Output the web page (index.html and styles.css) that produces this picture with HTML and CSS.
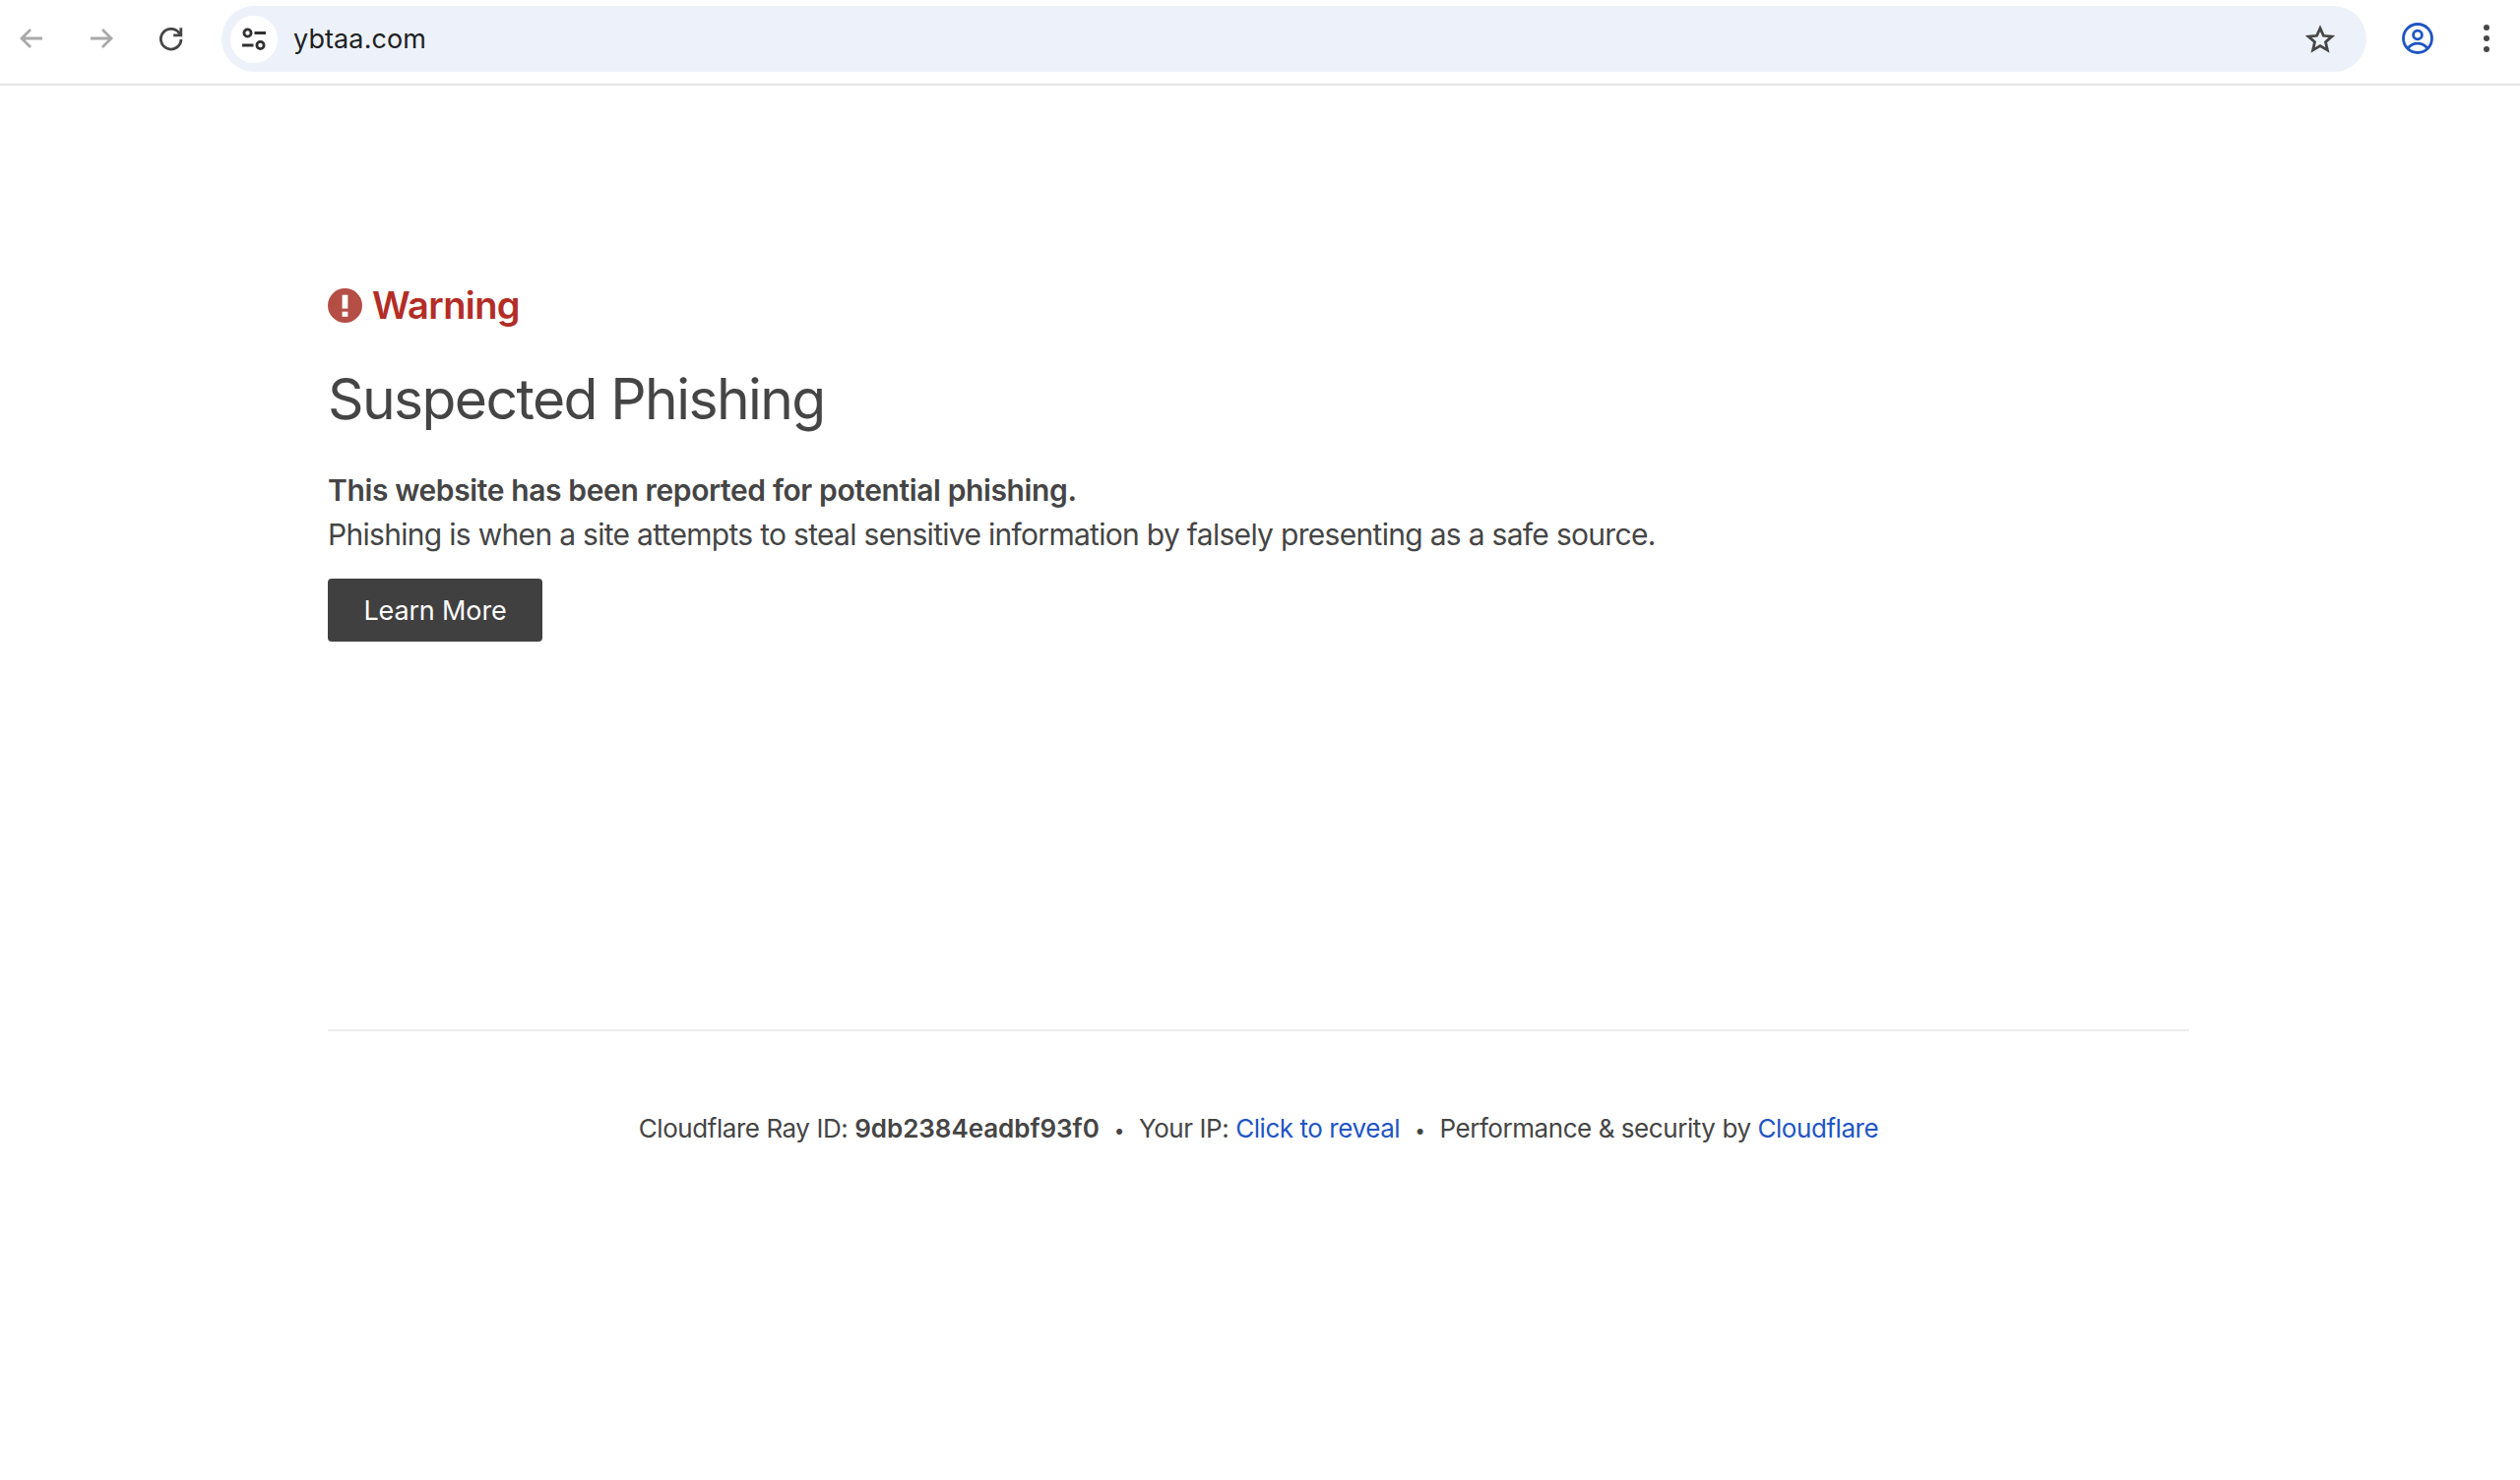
FILE: index.html
```html
<!DOCTYPE html>
<html lang="en">

<head>
    <meta charset="UTF-8">
    <meta name="viewport" content="width=device-width, initial-scale=1.0">
    <title>ybtaa.com</title>
    <link rel="stylesheet" href="styles.css">
</head>

<body>
    <header class="toolbar">
        <div class="nav-buttons">
            <svg class="nav-icon dim" viewBox="0 0 28 28">
                <path d="M25 14H4M13 5l-9 9 9 9" />
            </svg>
            <svg class="nav-icon dim" viewBox="0 0 28 28">
                <path d="M3 14h21M15 5l9 9-9 9" />
            </svg>
            <svg class="nav-icon" viewBox="0 0 28 28">
                <path d="M22.6 9.5A10.3 10.3 0 1 0 24 15" />
                <path d="M23.8 3.2v7.6h-7.6" />
            </svg>
        </div>
        <div class="omnibox">
            <span class="site-chip">
                <svg viewBox="0 0 28 28" class="chip-icon">
                    <circle cx="7.5" cy="7.5" r="3.6" />
                    <path d="M14.5 7.5H26M2 20h11.5" />
                    <circle cx="20.5" cy="20" r="3.6" />
                </svg>
            </span>
            <span class="url">ybtaa.com</span>
            <svg class="star" viewBox="0 0 30 30">
                <path d="M15 3.6l3.4 7.7 8.4.8-6.3 5.6 1.9 8.2-7.4-4.3-7.4 4.3 1.9-8.2-6.3-5.6 8.4-.8z" />
            </svg>
        </div>
        <svg class="avatar" viewBox="0 0 32 32">
            <circle cx="16" cy="16" r="14.5" />
            <circle cx="16" cy="12.5" r="4.4" />
            <path d="M6.5 25.5c2.5-3 5.8-4.4 9.5-4.4s7 1.4 9.5 4.4" />
        </svg>
        <div class="kebab">
            <span></span>
            <span></span>
            <span></span>
        </div>
    </header>

    <main class="page">
        <section class="warning-box">
            <h2 class="warning">
                <svg class="warning-icon" viewBox="0 0 34 34">
                    <circle cx="17" cy="17" r="17" />
                    <rect x="14.2" y="6.5" width="5.6" height="13.5" fill="#fff" />
                    <rect x="14.2" y="23" width="5.6" height="5" fill="#fff" />
                </svg>
                Warning
            </h2>
            <h1 class="title">Suspected Phishing</h1>
            <p class="lead"><strong>This website has been reported for potential phishing.</strong></p>
            <p class="lead">Phishing is when a site attempts to steal sensitive information by falsely presenting as a safe source.</p>
            <button class="learn-more">Learn More</button>
        </section>

        <footer class="footer">
            <span>Cloudflare Ray ID: <strong>9db2384eadbf93f0</strong></span>
            <span class="sep">•</span>
            <span>Your IP: <a href="#">Click to reveal</a></span>
            <span class="sep">•</span>
            <span>Performance &amp; security by <a href="#">Cloudflare</a></span>
        </footer>
    </main>
</body>

</html>
```

FILE: styles.css
```css
* {
    box-sizing: border-box;
}

body {
    margin: 0;
    background: #fff;
    color: #454545;
    font-family: 'Inter', 'Liberation Sans', sans-serif;
}

.toolbar {
    height: 87px;
    display: flex;
    align-items: flex-start;
    border-bottom: 2px solid #e4e4e4;
    padding-top: 6px;
}

.nav-buttons {
    display: flex;
    gap: 43px;
    width: 225px;
    padding: 19px 0 0 18px;
    flex-shrink: 0;
}

.nav-icon {
    width: 28px;
    height: 28px;
    fill: none;
    stroke: #454545;
    stroke-width: 2.8;

    &.dim {
        stroke: #a9a9a9;
    }
}

.omnibox {
    width: 2179px;
    height: 67px;
    flex-shrink: 0;
    display: flex;
    align-items: center;
    padding: 0 32px 0 9px;
    border-radius: 34px;
    background: #edf2fa;
}

.site-chip {
    width: 48px;
    height: 48px;
    flex-shrink: 0;
    display: flex;
    align-items: center;
    justify-content: center;
    border-radius: 50%;
    background: #fff;
}

.chip-icon {
    width: 28px;
    height: 28px;
    fill: none;
    stroke: #303030;
    stroke-width: 2.8;
}

.url {
    margin-left: 16px;
    color: #202124;
    font-size: 27px;
    letter-spacing: 0.1px;
}

.star {
    width: 30px;
    height: 30px;
    margin-left: auto;
    fill: none;
    stroke: #474747;
    stroke-width: 2.8;
}

.avatar {
    width: 32px;
    height: 32px;
    margin: 17px 0 0 36px;
    flex-shrink: 0;
    fill: none;
    stroke: #1f55c4;
    stroke-width: 2.8;
}

.kebab {
    display: flex;
    flex-direction: column;
    gap: 5px;
    margin: 19px 0 0 51px;

    span {
        width: 6px;
        height: 6px;
        border-radius: 50%;
        background: #474747;
    }
}

.page {
    width: 1891px;
    margin-left: 333px;
}

.warning-box {
    height: 959px;
    padding-top: 200px;
}

.warning {
    margin: 0;
    display: flex;
    align-items: center;
    gap: 10px;
    height: 46px;
    color: #b32d27;
    font-size: 38px;
    font-weight: 600;
    letter-spacing: -0.6px;
}

.warning-icon {
    width: 35px;
    height: 35px;
    fill: #b54e45;
}

.title {
    margin: 38px 0 0;
    font-size: 57px;
    font-weight: 400;
    line-height: 70px;
    letter-spacing: -1.6px;
}

.lead {
    margin: 0;
    font-size: 30px;
    line-height: 45px;
    letter-spacing: -0.7px;

    &:first-of-type {
        margin-top: 35px;
    }

    strong {
        font-weight: 600;
        letter-spacing: -0.38px;
    }
}

.learn-more {
    display: block;
    width: 218px;
    height: 64px;
    margin-top: 22px;
    border: none;
    border-radius: 4px;
    background: #404040;
    color: #fff;
    font-family: inherit;
    font-size: 27px;
    letter-spacing: -0.15px;
}

.footer {
    border-top: 2px solid #ececec;
    padding-top: 79px;
    display: flex;
    justify-content: center;
    align-items: baseline;
    gap: 15px;
    font-size: 26px;
    line-height: 40px;
    letter-spacing: -0.44px;

    strong {
        font-weight: 600;
        letter-spacing: -0.05px;
    }

    a {
        color: #1f55c4;
        text-decoration: none;
    }

    .sep {
        font-size: 19px;
    }
}
```
